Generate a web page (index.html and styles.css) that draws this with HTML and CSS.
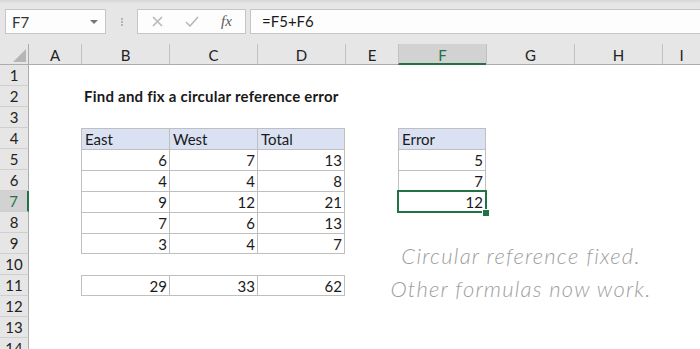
FILE: index.html
```html
<!DOCTYPE html>
<html lang="en">
<head>
  <meta charset="UTF-8">
  <title>Circular reference fixed</title>
  <link rel="stylesheet" href="styles.css">
</head>
<body>
  <div class="toolbar">
    <div class="namebox">
      <span>F7</span>
      <svg class="caret" viewBox="0 0 8 4" width="8" height="4"><path d="M0 0h8L4 4z"/></svg>
    </div>
    <div class="grip"><i></i><i></i><i></i></div>
    <div class="fxbox">
      <svg class="cancel" viewBox="0 0 11 11" width="11" height="11"><path d="M1 1l9 9M10 1l-9 9"/></svg>
      <svg class="enter" viewBox="0 0 14 11" width="14" height="11"><path d="M1 6l4 4 8-9"/></svg>
      <span class="fx">fx</span>
    </div>
    <div class="formula">=F5+F6</div>
  </div>
  <div class="sheet" id="sheet">
    <div class="note">Circular reference fixed.<br>Other formulas now work.</div>
  </div>
  <script>
    const cols = ['A', 'B', 'C', 'D', 'E', 'F', 'G', 'H', 'I'];
    const data = {
      B2: 'Find and fix a circular reference error',
      B4: 'East', C4: 'West', D4: 'Total', F4: 'Error',
      B5: 6, C5: 7, D5: 13, F5: 5,
      B6: 4, C6: 4, D6: 8, F6: 7,
      B7: 9, C7: 12, D7: 21, F7: 12,
      B8: 7, C8: 6, D8: 13,
      B9: 3, C9: 4, D9: 7,
      B11: 29, C11: 33, D11: 62
    };
    const boxes = [
      { c1: 1, r1: 4, c2: 3, r2: 9, head: true },
      { c1: 5, r1: 4, c2: 5, r2: 7, head: true },
      { c1: 1, r1: 11, c2: 3, r2: 11 }
    ];
    const active = 'F7';
    const sheet = document.getElementById('sheet');

    function add(cls, text) {
      const el = document.createElement('div');
      el.className = cls;
      if (text !== undefined) el.textContent = text;
      sheet.appendChild(el);
      return el;
    }

    const corner = add('corner');
    corner.innerHTML = '<svg viewBox="0 0 13 13" width="13" height="13"><path d="M13 0v13H0z"/></svg>';
    cols.forEach(c => add('colhead' + (active[0] === c ? ' sel' : ''), c));

    for (let r = 1; r <= 14; r++) {
      add('rowhead' + (active.slice(1) == r ? ' sel' : ''), r);
      cols.forEach((c, i) => {
        const id = c + r;
        const val = data[id];
        let cls = 'cell';
        if (id === 'B2') cls += ' title';
        boxes.forEach(b => {
          if (i >= b.c1 && i <= b.c2 && r >= b.r1 && r <= b.r2) {
            cls += ' box';
            if (i === b.c2) cls += ' last-col';
            if (r === b.r2) cls += ' last-row';
            if (b.head && r === b.r1) cls += ' head';
          }
        });
        if (typeof val === 'number') cls += ' num';
        if (id === active) cls += ' active';
        add(cls, val);
      });
    }
  </script>
</body>
</html>
```

FILE: styles.css
```css
body {
  margin: 0;
  font-family: Lato, "Noto Sans", sans-serif;
  background: #fff;
  color: #1a1a1a;
  overflow: hidden;
}
.toolbar {
  height: 44px;
  box-sizing: border-box;
  padding-top: 9px;
  display: flex;
  align-items: flex-start;
  background: linear-gradient(#d8d8d8, #e6e6e6 4px);
}
.namebox {
  margin-left: 5px;
  width: 101px;
  height: 25px;
  box-sizing: border-box;
  border: 1px solid #c6c6c6;
  background: #fdfdfd;
  display: flex;
  align-items: center;
  justify-content: space-between;
  padding: 0 7px 0 6px;
  font-size: 15px;
  color: #333;
}
.caret {
  fill: #777;
}
.grip {
  width: 31px;
  padding-top: 9px;
  display: flex;
  flex-direction: column;
  align-items: center;
  gap: 1px;
}
.grip i {
  width: 2px;
  height: 2px;
  background: #b4b4b4;
}
.fxbox {
  width: 109px;
  height: 25px;
  box-sizing: border-box;
  border: 1px solid #c6c6c6;
  background: #fdfdfd;
  display: flex;
  align-items: center;
}
.fxbox svg {
  fill: none;
  stroke: #b8b8b8;
  stroke-width: 1.6;
}
.cancel {
  margin-left: 14px;
}
.enter {
  margin-left: 22px;
}
.fx {
  margin-left: 22px;
  font-family: "Liberation Serif", serif;
  font-style: italic;
  font-size: 15px;
  color: #5a5a5a;
}
.formula {
  margin-left: 4px;
  flex: 1;
  height: 25px;
  box-sizing: border-box;
  border: 1px solid #c6c6c6;
  border-right: none;
  background: #fdfdfd;
  padding-left: 11px;
  font-size: 15px;
  line-height: 23px;
}
.sheet {
  position: relative;
  display: grid;
  grid-template-columns: 29px 52px 88px 88px 88px 53px 88px 88px 88px 1fr;
  grid-auto-rows: 21px;
  font-size: 15px;
}
.corner {
  background: #e6e6e6;
  border-right: 1px solid #ababab;
  border-bottom: 1px solid #ababab;
  display: flex;
  align-items: flex-end;
  justify-content: flex-end;
  padding: 0 2px 2px 0;
}
.corner svg {
  fill: #b5b5b5;
}
.colhead {
  background: #e6e6e6;
  border-bottom: 1px solid #ababab;
  border-left: 1px solid #c2c2c2;
  text-align: center;
  line-height: 22px;
  color: #222;
}
.colhead:nth-child(3) {
  border-left: none;
}
.colhead.sel {
  background: #d2d2d2;
  border-bottom: 2px solid #217346;
  color: #217346;
}
.rowhead {
  background: #e6e6e6;
  border-right: 1px solid #ababab;
  border-bottom: 1px solid #cfcfcf;
  text-align: center;
  line-height: 21px;
  color: #222;
}
.rowhead.sel {
  background: #d2d2d2;
  border-right: 2px solid #217346;
  color: #217346;
}
.cell {
  position: relative;
  padding: 0 2px 0 4px;
  line-height: 21px;
  white-space: nowrap;
}
.title {
  font-weight: bold;
  padding-left: 3px;
  letter-spacing: 0.23px;
}
.box {
  border-top: 1px solid #bfbfbf;
  border-left: 1px solid #bfbfbf;
  padding-left: 3px;
  line-height: 20px;
}
.box.last-col {
  border-right: 1px solid #bfbfbf;
}
.box.last-row {
  border-bottom: 1px solid #bfbfbf;
}
.head {
  background: #d9e1f2;
}
.num {
  text-align: right;
}
.active::after {
  content: "";
  position: absolute;
  left: -2px;
  top: -2px;
  right: -2px;
  bottom: -2px;
  border: 2px solid #217346;
}
.active::before {
  content: "";
  position: absolute;
  right: -4px;
  bottom: -5px;
  width: 6px;
  height: 6px;
  background: #217346;
  border-left: 1px solid #fff;
  border-top: 1px solid #fff;
  z-index: 1;
}
.note {
  position: absolute;
  left: 380px;
  top: 195px;
  width: 282px;
  text-align: center;
  white-space: nowrap;
  font-style: italic;
  font-weight: 300;
  font-size: 22px;
  letter-spacing: 1.2px;
  line-height: 33px;
  color: #9e9e9e;
}
```
